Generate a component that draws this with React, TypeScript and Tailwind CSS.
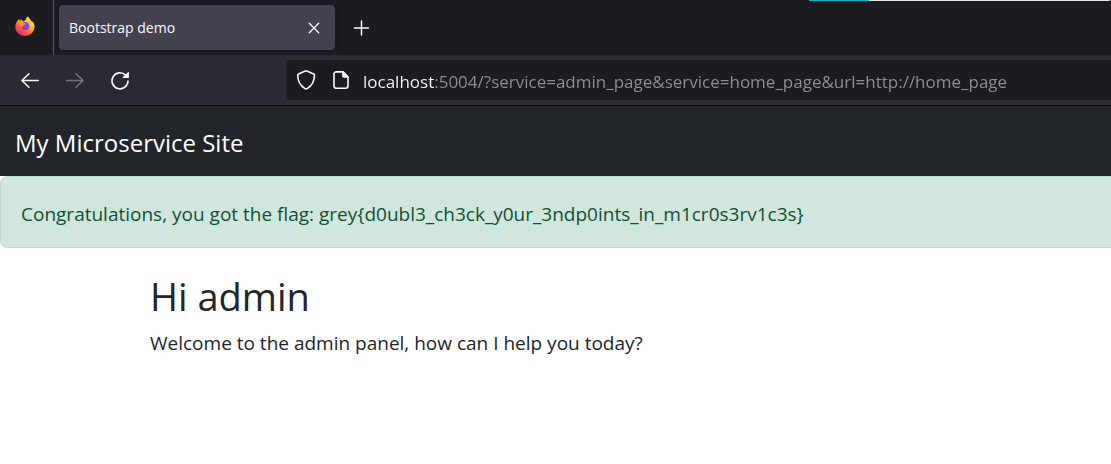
import { useState } from "react";

function FirefoxLogo() {
  return (
    <svg viewBox="0 0 20 20" className="size-5" aria-hidden="true">
      <defs>
        <linearGradient id="flame" x1="0.85" y1="0.05" x2="0.2" y2="0.95">
          <stop offset="0" stopColor="#fff44f" />
          <stop offset="0.35" stopColor="#ffbd2e" />
          <stop offset="0.65" stopColor="#ff6a36" />
          <stop offset="1" stopColor="#f0187a" />
        </linearGradient>
        <radialGradient id="globe" cx="0.6" cy="0.3" r="0.8">
          <stop offset="0" stopColor="#a04cf5" />
          <stop offset="1" stopColor="#6a3fd0" />
        </radialGradient>
      </defs>
      <path
        d="M18.900 7.600c-.5-1.200-1.400-2.300-2.200-2.700.2.500.4 1 .5 1.500-.8-2-2.200-2.900-3.300-4.600C13.400 1.100 13.300.6 13.300.2c-2 1.200-2.800 3.200-2.900 4.300-.9.100-1.800.4-2.500.9-.5-.5-.9-1.300-.7-2.200-1 .4-1.700 1.100-2.300 1.800-.4-.4-.4-1.700-.3-2.200C3.300 3.800.3 6.600.3 11c0 5 4.200 8.900 9.500 8.900 5 0 9.200-3.500 9.700-8.300.1-1.300 0-2.700-.6-4z"
        fill="url(#flame)"
      />
      <circle cx="10.300" cy="9.900" r="3.900" fill="url(#globe)" />
      <path
        d="M3.800 6.300c1.600-.3 2.900.1 3.600.8.800-.3 1.900-.1 2.700.3.300.2.200.9-.1 1.100-.6.500-1.500.7-1.800 1.200-.1.300 0 .8-.3 1-.9.600-2 0-2.500-.9-1.200-.8-1.800-2-1.600-3.500z"
        fill="#ff8f2b"
      />
    </svg>
  );
}

function BackArrow() {
  return (
    <svg viewBox="0 0 20 20" className="size-5" fill="none" stroke="currentColor" strokeWidth="1.5" strokeLinecap="round" strokeLinejoin="round" aria-hidden="true">
      <path d="M18.300 10.500H2M9 3.700L1.900 10.500 9 17.300" />
    </svg>
  );
}

function ForwardArrow() {
  return (
    <svg viewBox="0 0 20 20" className="size-5" fill="none" stroke="currentColor" strokeWidth="1.5" strokeLinecap="round" strokeLinejoin="round" aria-hidden="true">
      <path d="M1.700 10.500H18M11 3.700L18.100 10.500 11 17.300" />
    </svg>
  );
}

function ReloadIcon() {
  return (
    <svg viewBox="0 0 20 20" className="size-5" fill="none" stroke="currentColor" strokeWidth="1.6" strokeLinecap="round" aria-hidden="true">
      <path d="M18 11A8 8 0 1 1 15.600 5.100" />
      <path d="M18.900 2.300v5.300a.5.500 0 0 1-.5.500h-5.300c-.5 0-.7-.5-.4-.8l5.400-5.400c.3-.3.800-.1.800.4z" fill="currentColor" stroke="none" />
    </svg>
  );
}

function ShieldIcon() {
  return (
    <svg viewBox="0 0 20 20" className="size-5" fill="none" stroke="currentColor" strokeWidth="1.6" strokeLinejoin="round" aria-hidden="true">
      <path d="M9.300 1.100C9.800.9 10.300.9 10.800 1.100l6.900 2.900c.5.200.8.600.8 1.100 0 5.600-1.900 10.300-7.300 13.500-.7.400-1.500.4-2.200 0C3.600 15.400 1.700 10.700 1.700 5.100c0-.5.300-.9.800-1.100z" />
    </svg>
  );
}

function PageIcon() {
  return (
    <svg viewBox="0 0 20 20" className="size-5" aria-hidden="true">
      <path d="M12 1.900H5.200A2.200 2.200 0 0 0 3 4.100v12a2.200 2.200 0 0 0 2.200 2.200h9.600a2.200 2.200 0 0 0 2.200-2.200V7z" fill="none" stroke="currentColor" strokeWidth="1.6" strokeLinejoin="round" />
      <path d="M11.200 1.500h1.300l5 5v1.300h-4.800a1.500 1.500 0 0 1-1.500-1.500z" fill="currentColor" />
    </svg>
  );
}

function TabStrip() {
  return (
    <div className="flex h-[55px] bg-[#1c1b22]">
      <div className="flex w-[54px] shrink-0 items-center justify-center border-r border-[#5b5a61] pr-1 pb-1">
        <FirefoxLogo />
      </div>
      <div className="ml-[5px] flex h-[45px] w-[276px] shrink-0 items-center justify-between self-center rounded bg-[#42414d] pr-[13px] pl-[10px] text-[#fbfbfe] shadow-[0_0_4px_rgba(0,0,0,0.4)]">
        <span className="text-sm leading-5">Bootstrap demo</span>
        <button type="button" aria-label="Close tab" className="flex size-4 items-center justify-center">
          <svg viewBox="0 0 12 12" className="size-3" stroke="currentColor" strokeWidth="1.3" strokeLinecap="round" aria-hidden="true">
            <path d="M1.300 1.300l9.400 9.400M10.700 1.300L1.300 10.700" />
          </svg>
        </button>
      </div>
      <button type="button" aria-label="New tab" className="ml-[18px] flex w-4 shrink-0 items-center justify-center text-[#fbfbfe]">
        <svg viewBox="0 0 16 16" className="size-4" stroke="currentColor" strokeWidth="1.5" strokeLinecap="round" aria-hidden="true">
          <path d="M8.500 1v14M1.500 8h14" />
        </svg>
      </button>
      <div className="ml-auto flex h-px w-[302px] pr-px">
        <div className="w-[60px] bg-[#00b7c3]" />
        <div className="grow bg-[#e3e6e4]" />
      </div>
    </div>
  );
}

function Toolbar() {
  const [url, setUrl] = useState(
    "localhost:5004/?service=admin_page&service=home_page&url=http://home_page",
  );
  return (
    <div className="flex h-[51px] items-center border-b border-[#0c0c0d] bg-[#2b2a33] pl-5 text-[#fbfbfe]">
      <div className="flex w-[266px] shrink-0 gap-[25px]">
        <button type="button" aria-label="Go back">
          <BackArrow />
        </button>
        <button type="button" aria-label="Go forward" disabled className="text-[#77767d]">
          <ForwardArrow />
        </button>
        <button type="button" aria-label="Reload">
          <ReloadIcon />
        </button>
      </div>
      <div className="flex h-10 min-w-0 grow items-center rounded-l bg-[#1c1b22] pl-[10px]">
        <button type="button" aria-label="Tracking protection">
          <ShieldIcon />
        </button>
        <button type="button" aria-label="Site information" className="ml-[15px]">
          <PageIcon />
        </button>
        <input
          aria-label="Address"
          value={url}
          onChange={(event) => setUrl(event.target.value)}
          spellCheck={false}
          className="ml-3 h-8 min-w-0 grow bg-[linear-gradient(to_right,#fbfbfe_71px,#8f8f94_71px)] bg-clip-text pt-0.5 text-[17px] text-transparent caret-white outline-none"
        />
      </div>
    </div>
  );
}

export default function App() {
  return (
    <div className="min-h-screen bg-white font-['Open_Sans','Noto_Sans',sans-serif] text-[#212529]">
      <header>
        <TabStrip />
        <Toolbar />
      </header>
      <nav className="flex h-[70px] items-center bg-[#212529] px-[15px] pt-1">
        <a href="#" className="text-[24px] leading-9 text-white">
          My Microservice Site
        </a>
      </nav>
      <div role="alert" className="rounded-l-lg border border-r-0 border-[#badbcc] bg-[#d1e7dd] px-5 pt-[23px] pb-[19px] text-[19px] leading-7 text-[#0f5132]">
        Congratulations, you got the flag: grey&#123;d0ubl3_ch3ck_y0ur_3ndp0ints_in_m1cr0s3rv1c3s&#125;
      </div>
      <main className="px-[150px] pt-6">
        <h1 className="text-[38px] leading-12">Hi admin</h1>
        <p className="mt-[9px] text-[19px] leading-7">Welcome to the admin panel, how can I help you today?</p>
      </main>
    </div>
  );
}
